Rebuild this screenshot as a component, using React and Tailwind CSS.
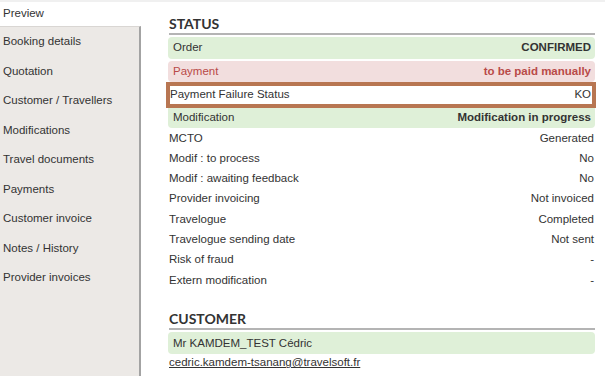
import React from "react";

const menu = [
  "Booking details",
  "Quotation",
  "Customer / Travellers",
  "Modifications",
  "Travel documents",
  "Payments",
  "Customer invoice",
  "Notes / History",
  "Provider invoices",
];

const plainRows = [
  ["MCTO", "Generated"],
  ["Modif : to process", "No"],
  ["Modif : awaiting feedback", "No"],
  ["Provider invoicing", "Not invoiced"],
  ["Travelogue", "Completed"],
  ["Travelogue sending date", "Not sent"],
  ["Risk of fraud", "-"],
  ["Extern modification", "-"],
];

function Heading({ children }) {
  return (
    <div className="pl-[1px]">
      <div className="font-['Lato',sans-serif] font-bold text-[14px] leading-[17px] text-[#333]">
        {children}
      </div>
      <div className="h-[2px] bg-[#b4b4b4] mt-[-2px] translate-y-[3px]" />
    </div>
  );
}

export default function App() {
  return (
    <div className="w-[605px] h-[376px] bg-white font-['Liberation_Sans',Arial,sans-serif] text-[11.5px] text-[#333] overflow-hidden flex flex-col">
      <div className="h-[2px] bg-[#f0f0f0]" />
      <div className="flex flex-1 min-h-0">
        {/* Sidebar */}
        <div className="w-[141px] flex flex-col">
          <div className="h-[24px] leading-[22px] pl-[3px] bg-white">Preview</div>
          <div className="flex-1 bg-[#ece9e6] border-r-2 border-t border-t-[#d9d6d3] border-r-[#a3a3a3]">
            {menu.map((m) => (
              <div key={m} className="h-[29.5px] leading-[29.5px] pl-[3px]">
                {m}
              </div>
            ))}
          </div>
        </div>

        {/* Main */}
        <div className="flex-1 pl-[27px] pr-[10px] pt-[13px]">
          <Heading>STATUS</Heading>

          <div className="mt-[5px] h-[22px] rounded-[4px] bg-[#dff0d8] flex items-center justify-between pl-[5px] pr-[4px]">
            <span>Order</span>
            <span className="font-bold">CONFIRMED</span>
          </div>
          <div className="mt-[2px] h-[21px] rounded-[4px] bg-[#f2dede] flex items-center justify-between pl-[5px] pr-[4px] text-[#b94a48]">
            <span>Payment</span>
            <span className="font-bold">to be paid manually</span>
          </div>
          <div className="-ml-[2px] -mr-[1px] h-[26px] border-4 border-[#b87652] bg-white flex items-center justify-between pr-[1px]">
            <span>Payment Failure Status</span>
            <span>KO</span>
          </div>
          <div className="h-[20px] rounded-b-[4px] bg-[#dff0d8] flex items-center justify-between pl-[5px] pr-[4px]">
            <span>Modification</span>
            <span className="font-bold">Modification in progress</span>
          </div>

          {plainRows.map(([k, v]) => (
            <div key={k} className="h-[20.3px] flex items-center justify-between pl-[1px] pr-[1px]">
              <span>{k}</span>
              <span>{v}</span>
            </div>
          ))}

          <div className="mt-[20px]">
            <Heading>CUSTOMER</Heading>
          </div>
          <div className="mt-[5px] h-[22px] rounded-[4px] bg-[#dff0d8] flex items-center pl-[5px]">
            Mr KAMDEM_TEST Cédric
          </div>
          <div className="pl-[1px] mt-[1px] leading-[14px] underline">
            cedric.kamdem-tsanang@travelsoft.fr
          </div>
        </div>
      </div>
    </div>
  );
}
